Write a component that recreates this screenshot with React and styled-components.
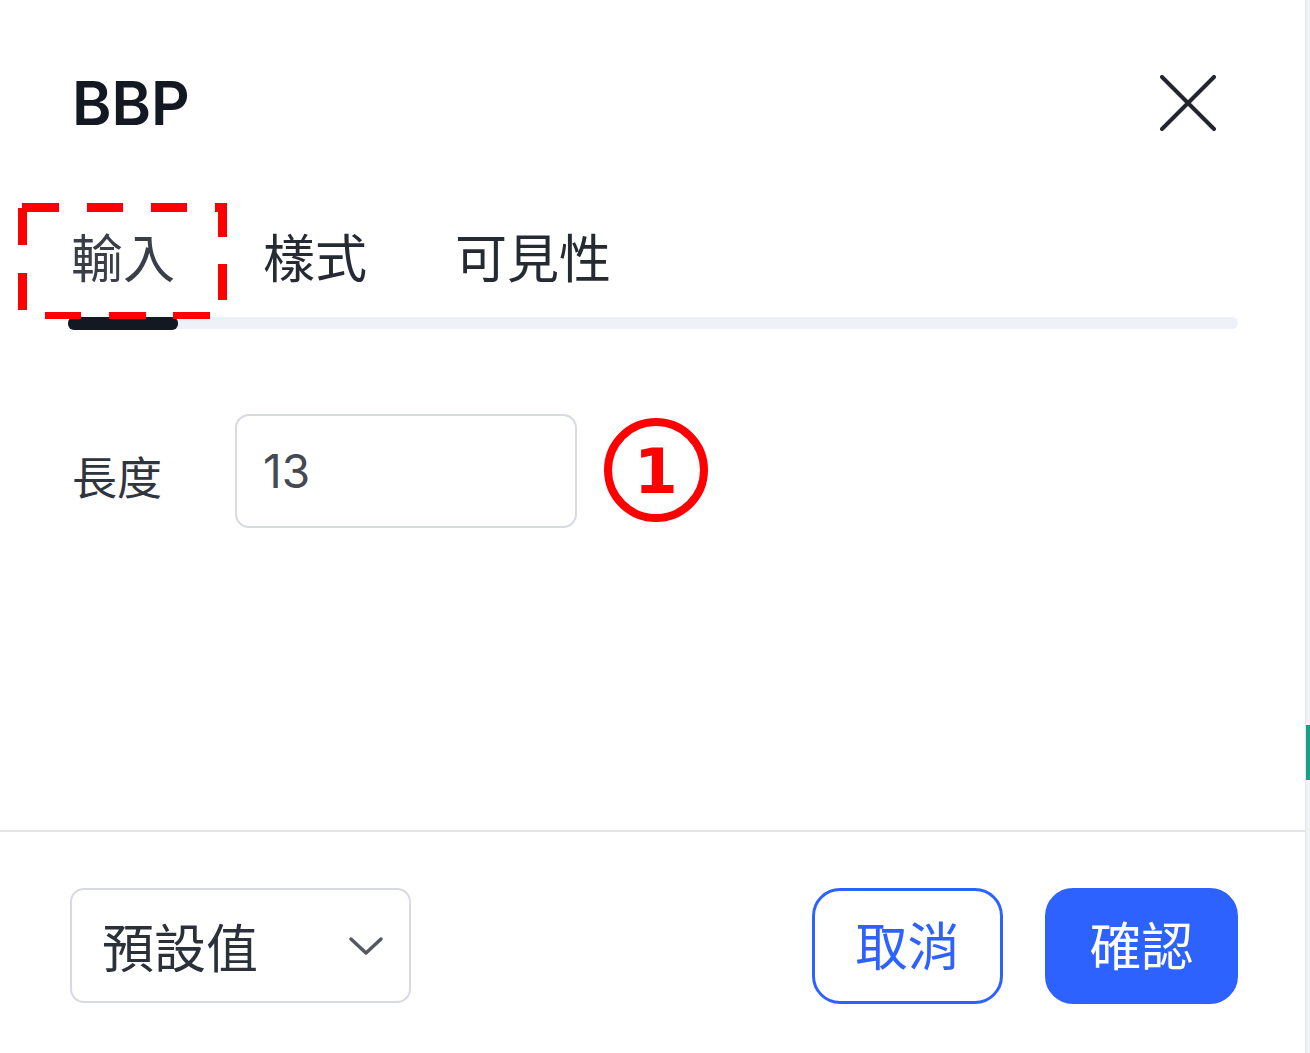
import React from "react";
import styled, { createGlobalStyle } from "styled-components";

const Global = createGlobalStyle`
  html, body { margin: 0; padding: 0; background: #f1f2f4; }
  body { font-family: "Inter", "Noto Sans CJK TC", sans-serif; }
  * { box-sizing: border-box; }
`;

const Page = styled.div`
  display: flex;
  height: 1053px;
  width: 1310px;
  overflow: hidden;
`;

const Dialog = styled.div`
  flex: 1;
  display: flex;
  flex-direction: column;
  background: #fff;
  border-right: 1px solid #e2e4e8;
`;

const SideStrip = styled.div`
  width: 4px;
  display: flex;
  flex-direction: column;
`;

const TealBar = styled.div`
  margin-top: 725px;
  height: 55px;
  background: #17a08a;
`;

const Header = styled.div`
  display: flex;
  align-items: center;
  justify-content: space-between;
  padding: 67px 89px 0 72px;
`;

const Title = styled.h1`
  margin: 0;
  font-family: "Inter", sans-serif;
  font-weight: 600;
  font-size: 60px;
  line-height: 72px;
  color: #141822;
`;

const CloseButton = styled.button`
  border: 0;
  background: none;
  padding: 0;
  width: 56px;
  height: 56px;
  display: flex;
  align-items: center;
  justify-content: center;
  cursor: pointer;
`;

const TabBar = styled.div`
  margin: 91px 67px 0 68px;
`;

const TabRow = styled.div`
  display: flex;
  gap: 88px;
  padding-left: 3px;
`;

const Tab = styled.div`
  position: relative;
  font-family: "Noto Sans CJK TC", sans-serif;
  font-size: 52px;
  line-height: 52px;
  color: ${(p) => (p.$active ? "#3a3e48" : "#262a33")};
`;

const DashFrame = styled.svg`
  position: absolute;
  left: -53px;
  top: -27px;
  overflow: visible;
`;

const Track = styled.div`
  margin-top: 35px;
  height: 12px;
  border-radius: 6px;
  background: #eef1f8;
  display: flex;
`;

const Indicator = styled.div`
  width: 110px;
  height: 13px;
  border-radius: 6px;
  background: #141822;
`;

const Body = styled.div`
  flex: 1;
  padding: 85px 67px 0 72px;
`;

const FieldRow = styled.div`
  display: flex;
  align-items: center;
`;

const Label = styled.label`
  width: 163px;
  font-family: "Noto Sans CJK TC", sans-serif;
  font-size: 45px;
  color: #30343d;
  padding-top: 8px;
`;

const Input = styled.div`
  width: 342px;
  height: 114px;
  border: 2px solid #d7dae1;
  border-radius: 14px;
  display: flex;
  align-items: center;
  padding-left: 26px;
  font-family: "Inter", sans-serif;
  font-size: 46px;
  color: #444954;
`;

const Marker = styled.svg`
  margin-left: 26px;
  flex: none;
`;

const Footer = styled.div`
  border-top: 2px solid #e3e5ea;
  height: 223px;
  display: flex;
  align-items: flex-start;
  justify-content: space-between;
  padding: 56px 67px 0 70px;
`;

const Select = styled.div`
  width: 341px;
  height: 115px;
  border: 2px solid #d7dae1;
  border-radius: 14px;
  display: flex;
  align-items: center;
  justify-content: space-between;
  padding: 0 24px 0 30px;
  font-family: "Noto Sans CJK TC", sans-serif;
  font-size: 52px;
  color: #2c3039;
`;

const Actions = styled.div`
  display: flex;
  gap: 42px;
`;

const Button = styled.button`
  width: ${(p) => (p.$primary ? "193px" : "191px")};
  height: 116px;
  border-radius: 28px;
  border: 3px solid #2e62ff;
  background: ${(p) => (p.$primary ? "#2e62ff" : "#fff")};
  color: ${(p) => (p.$primary ? "#fff" : "#2e62ff")};
  font-family: "Noto Sans CJK TC", sans-serif;
  font-size: 52px;
  padding: 0;
  padding-bottom: 6px;
  display: flex;
  align-items: center;
  justify-content: center;
`;

const dashes = [
  // top edge
  [4, 0, 37, 9], [69, 0, 36, 9], [133, 0, 36, 9], [197, 0, 12, 9],
  // right edge
  [200, 0, 9, 34], [200, 61, 9, 36],
  // bottom edge
  [27, 109, 36, 7], [91, 109, 37, 7], [155, 109, 37, 7],
  // left edge
  [0, 5, 9, 37], [0, 70, 9, 37],
];

export default function App() {
  return (
    <>
      <Global />
      <Page>
        <Dialog>
          <Header>
            <Title>BBP</Title>
            <CloseButton aria-label="close">
              <svg width="56" height="56" viewBox="0 0 56 56">
                <path
                  d="M2 2 L54 54 M54 2 L2 54"
                  stroke="#23262f"
                  strokeWidth="4"
                  strokeLinecap="round"
                  fill="none"
                />
              </svg>
            </CloseButton>
          </Header>
          <TabBar>
            <TabRow>
              <Tab $active>
                輸入
                <DashFrame width="209" height="116" viewBox="0 0 209 116">
                  {dashes.map(([x, y, w, h], i) => (
                    <rect key={i} x={x} y={y} width={w} height={h} fill="#ff0000" />
                  ))}
                </DashFrame>
              </Tab>
              <Tab>樣式</Tab>
              <Tab>可見性</Tab>
            </TabRow>
            <Track>
              <Indicator />
            </Track>
          </TabBar>
          <Body>
            <FieldRow>
              <Label>長度</Label>
              <Input>13</Input>
              <Marker width="106" height="106" viewBox="0 0 106 106">
                <circle cx="53" cy="52" r="48" fill="none" stroke="#ff0000" strokeWidth="8" />
                <text
                  x="53"
                  y="75"
                  textAnchor="middle"
                  fill="#ff0000"
                  fontFamily="DejaVu Sans, sans-serif"
                  fontWeight="700"
                  fontSize="63"
                >
                  1
                </text>
              </Marker>
            </FieldRow>
          </Body>
          <Footer>
            <Select>
              預設值
              <svg width="38" height="24" viewBox="0 0 38 24">
                <path
                  d="M4 5 L19 19 L34 5"
                  stroke="#535864"
                  strokeWidth="3.5"
                  fill="none"
                  strokeLinecap="round"
                  strokeLinejoin="round"
                />
              </svg>
            </Select>
            <Actions>
              <Button>取消</Button>
              <Button $primary>確認</Button>
            </Actions>
          </Footer>
        </Dialog>
        <SideStrip>
          <TealBar />
        </SideStrip>
      </Page>
    </>
  );
}
